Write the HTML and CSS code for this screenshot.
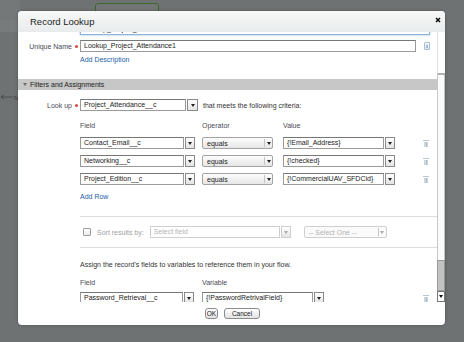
FILE: index.html
```html
<!DOCTYPE html>
<html lang="en">
<head>
    <meta charset="UTF-8">
    <meta name="viewport" content="width=device-width, initial-scale=1.0">
    <title>Record Lookup</title>
    <link rel="stylesheet" href="styles.css">
</head>
<body>

<!-- flow canvas behind the modal -->
<div class="bg-panel"></div>
<div class="bg-node"></div>
<svg class="bg-arrow" width="18" height="8" viewBox="0 0 18 8">
    <path d="M1 4H13M1 4L4 2M1 4L4 6" stroke="#444" stroke-width="0.8" fill="none"/>
    <text x="14" y="6.5" font-size="6" fill="#333" font-family="Liberation Sans, Arial, sans-serif">N</text>
</svg>

<div class="dialog">
    <div class="dialog-header">
        <span class="dialog-title">Record Lookup</span>
        <svg class="close-btn" width="6" height="6" viewBox="0 0 6 6">
            <path d="M1 1L5 5M5 1L1 5" stroke="#111" stroke-width="1.6"/>
        </svg>
    </div>

    <div class="dialog-body">
        <div class="scroll-content">
            <div class="form-row cut-row">
                <span class="row-label">Name</span>
                <span class="req"><i></i></span>
                <div class="text-input focused">Lookup_Project_Attendance</div>
            </div>

            <div class="form-row name-row">
                <span class="row-label">Unique Name</span>
                <span class="req"><i></i></span>
                <div class="text-input unique-input">Lookup_Project_Attendance1</div>
                <span class="info-icon">i</span>
            </div>
            <a class="link add-desc" href="#">Add Description</a>

            <div class="section-bar"><span class="tri"></span>Filters and Assignments</div>

            <div class="form-row lookup-row">
                <span class="row-label">Look up</span>
                <span class="req"><i></i></span>
                <div class="combo">
                    <span class="text-input lookup-input">Project_Attendance__c</span>
                    <span class="arrow-btn"></span>
                </div>
                <span class="hint">that meets the following criteria:</span>
            </div>

            <div class="criteria">
                <span class="col-head">Field</span>
                <span class="col-head">Operator</span>
                <span class="col-head">Value</span>
                <span></span>

                <div class="combo">
                    <span class="text-input field-input">Contact_Email__c</span>
                    <span class="arrow-btn"></span>
                </div>
                <div class="select op-select"><span>equals</span><span class="sel-arrow"></span></div>
                <div class="combo">
                    <span class="text-input value-input">{!Email_Address}</span>
                    <span class="arrow-btn"></span>
                </div>
                <span class="trash"></span>

                <div class="combo">
                    <span class="text-input field-input">Networking__c</span>
                    <span class="arrow-btn"></span>
                </div>
                <div class="select op-select"><span>equals</span><span class="sel-arrow"></span></div>
                <div class="combo">
                    <span class="text-input value-input">{!checked}</span>
                    <span class="arrow-btn"></span>
                </div>
                <span class="trash"></span>

                <div class="combo">
                    <span class="text-input field-input">Project_Edition__c</span>
                    <span class="arrow-btn"></span>
                </div>
                <div class="select op-select"><span>equals</span><span class="sel-arrow"></span></div>
                <div class="combo">
                    <span class="text-input value-input">{!CommercialUAV_SFDCid}</span>
                    <span class="arrow-btn"></span>
                </div>
                <span class="trash"></span>
            </div>
            <a class="link add-row" href="#">Add Row</a>

            <div class="divider first-divider"></div>

            <div class="sort-row">
                <span class="checkbox"></span>
                <span class="sort-label">Sort results by:</span>
                <div class="combo disabled">
                    <span class="text-input sort-input">Select field</span>
                    <span class="arrow-btn"></span>
                </div>
                <div class="select disabled order-select"><span>-- Select One --</span><span class="sel-arrow"></span></div>
            </div>

            <div class="divider second-divider"></div>

            <p class="assign-text">Assign the record's fields to variables to reference them in your flow.</p>

            <div class="assignments">
                <span class="col-head">Field</span>
                <span class="col-head">Variable</span>
                <span></span>

                <div class="combo">
                    <span class="text-input pw-input">Password_Retrieval__c</span>
                    <span class="arrow-btn"></span>
                </div>
                <div class="combo">
                    <span class="text-input var-input">{!PasswordRetrivalField}</span>
                    <span class="arrow-btn"></span>
                </div>
                <span class="trash"></span>
            </div>
        </div>

        <div class="scrollbar">
            <div class="scroll-top"></div>
            <div class="scroll-track"></div>
            <div class="scroll-thumb"></div>
            <div class="scroll-down"></div>
        </div>
    </div>

    <div class="dialog-footer">
        <button class="btn ok-btn">OK</button>
        <button class="btn cancel-btn">Cancel</button>
    </div>
</div>

</body>
</html>
```

FILE: styles.css
```css
/* page */
body {
    margin: 0;
    width: 464px;
    height: 342px;
    overflow: hidden;
    position: relative;
    background-color: #6e7272;
    font-family: "Liberation Sans", Arial, sans-serif;
    font-size: 7px;
    color: #333;
}

/* canvas bits behind the modal */
.bg-panel {
    position: absolute;
    left: 0;
    top: 0;
    width: 20px;
    height: 32px;
    background-color: #777b7b;
    border-bottom-right-radius: 3px;
    border-top: 20px solid #747878;
    box-sizing: border-box;
}

.bg-node {
    position: absolute;
    left: 95px;
    top: 3px;
    width: 62px;
    height: 14px;
    border: 1px solid #3d6a2c;
    border-radius: 3px;
    background-color: #717575;
}

.bg-arrow {
    position: absolute;
    left: 0;
    top: 93px;
}

/* dialog */
.dialog {
    position: absolute;
    left: 18px;
    top: 11px;
    width: 427px;
    height: 314px;
    display: flex;
    flex-direction: column;
    background-color: #fff;
    border-radius: 4px;
    overflow: hidden;
    box-shadow: 0 0 3px rgba(0, 0, 0, 0.3);
}

.dialog-header {
    height: 21px;
    flex: none;
    display: flex;
    align-items: center;
    justify-content: space-between;
    padding: 0 4px 0 12px;
    background: linear-gradient(#f7f8f8, #e9ecec);
}

.dialog-title {
    font-size: 9.5px;
    color: #222;
}

.close-btn {
    margin-top: -3px;
}

.dialog-body {
    height: 270px;
    flex: none;
    display: flex;
}

.scroll-content {
    flex: 1;
    overflow: hidden;
}

.dialog-footer {
    flex: 1;
    display: flex;
    justify-content: center;
    align-items: flex-start;
    gap: 6px;
    padding-top: 6px;
    padding-left: 2px;
}

/* form rows */
.form-row {
    display: flex;
    align-items: center;
    height: 12px;
}

.row-label {
    width: 54px;
    text-align: right;
    color: #4a4a56;
}

.req {
    width: 8px;
    display: flex;
    justify-content: center;
}

.req i {
    width: 3px;
    height: 3px;
    border-radius: 50%;
    background-color: #e2453f;
}

.text-input {
    display: block;
    height: 12px;
    box-sizing: border-box;
    border: 1px solid #9a9a9a;
    border-top-color: #777;
    padding: 0 3px;
    line-height: 10px;
    color: #222;
    background-color: #fff;
    white-space: nowrap;
    overflow: hidden;
}

.cut-row {
    margin-top: -9px;
}

.cut-row .row-label {
    visibility: hidden;
}

.focused {
    width: 350px;
    border-color: #8db4de;
    box-shadow: 0 0 2px #8db4de;
}

.name-row {
    margin-top: 5px;
}

.unique-input {
    width: 336px;
}

.info-icon {
    width: 6px;
    height: 8px;
    margin-left: 8px;
    box-sizing: border-box;
    border: 1px solid #a9bfd6;
    border-radius: 1px;
    background: linear-gradient(#fff, #dbe6f1);
    color: #2c64a9;
    font-size: 5px;
    font-weight: bold;
    line-height: 6px;
    text-align: center;
}

.link {
    display: block;
    color: #1b5eaa;
    text-decoration: none;
    line-height: 10px;
    margin-left: 62px;
    width: max-content;
}

.add-desc {
    margin-top: 3px;
}

.section-bar {
    margin-top: 14px;
    height: 11px;
    line-height: 11px;
    background-color: #c7c7c7;
    padding-left: 5px;
    color: #222;
    display: flex;
    align-items: center;
}

.tri {
    width: 0;
    height: 0;
    border-left: 2px solid transparent;
    border-right: 2px solid transparent;
    border-top: 3px solid #6a6a6a;
    margin-right: 3px;
}

.lookup-row {
    margin-top: 9px;
}

.hint {
    margin-left: 5px;
    color: #333;
}

/* combo = text box + arrow button */
.combo {
    display: flex;
    gap: 1px;
    height: 12px;
}

.arrow-btn {
    width: 10px;
    height: 12px;
    box-sizing: border-box;
    border: 1px solid #8a8a8a;
    background: linear-gradient(#fff, #e4e4e4);
    display: flex;
    align-items: center;
    justify-content: center;
}

.arrow-btn::before,
.sel-arrow::before {
    content: "";
    border-left: 2px solid transparent;
    border-right: 2px solid transparent;
    border-top: 3px solid #222;
}

.lookup-input {
    width: 106px;
}

.lookup-row .arrow-btn {
    width: 11px;
}

/* native looking select */
.select {
    display: flex;
    align-items: center;
    height: 12px;
    box-sizing: border-box;
    border: 1px solid #a3a3a3;
    border-radius: 2px;
    background: linear-gradient(#fdfdfd, #e6e6e6);
    color: #222;
    padding-left: 4px;
}

.select span:first-child {
    flex: 1;
}

.sel-arrow {
    width: 7px;
    height: 8px;
    border-left: 1px solid #c4c4c4;
    display: flex;
    align-items: center;
    justify-content: center;
}

.op-select {
    width: 71px;
}

/* criteria grid */
.criteria {
    margin-top: 10px;
    margin-left: 62px;
    display: grid;
    grid-template-columns: 122px 81px 140px 7px;
    grid-template-rows: 10px;
    grid-auto-rows: 12px;
    row-gap: 6px;
    align-items: center;
}

.criteria .col-head {
    margin-top: -1px;
}

.col-head {
    color: #4a4a56;
    line-height: 10px;
}

.field-input {
    width: 104px;
}

.value-input {
    width: 101px;
}

.trash {
    width: 6px;
    height: 7px;
    background:
        linear-gradient(#b9c7d2, #b9c7d2) 0 0 / 6px 1px no-repeat,
        linear-gradient(90deg, #cbd6df 0 2px, #aebdc9 2px 3px, #cbd6df 3px) 1px 2px / 4px 5px no-repeat;
}

.add-row {
    margin-top: 7px;
}

.divider {
    border-top: 1px solid #dedede;
    margin-left: 62px;
}

.first-divider {
    margin-top: 14px;
}

/* sort */
.sort-row {
    display: flex;
    align-items: center;
    height: 12px;
    margin-top: 9px;
    margin-left: 65px;
}

.checkbox {
    width: 8px;
    height: 8px;
    box-sizing: border-box;
    border: 1px solid #9d9d9d;
    border-radius: 1px;
    background: linear-gradient(#fff, #ececec);
}

.sort-label {
    margin-left: 6px;
    color: #a0a0a0;
}

.sort-row .combo {
    margin-left: 6px;
}

.disabled .text-input,
.disabled .arrow-btn,
.select.disabled {
    border-color: #cfcfcf;
    color: #b4b4b4;
}

.disabled .arrow-btn::before,
.select.disabled .sel-arrow::before {
    border-top-color: #aaa;
}

.sort-input {
    width: 130px;
}

.order-select {
    width: 83px;
    margin-left: 13px;
    background: #fafafa;
}

.second-divider {
    margin-top: 9px;
}

.assign-text {
    margin: 12px 0 0 62px;
    line-height: 10px;
    color: #333;
}

.assignments {
    margin-top: 8px;
    margin-left: 62px;
    display: grid;
    grid-template-columns: 122px 221px 7px;
    grid-template-rows: 10px;
    grid-auto-rows: 12px;
    row-gap: 4px;
    align-items: center;
}

.pw-input {
    width: 103px;
}

.var-input {
    width: 111px;
}

/* scrollbar */
.scrollbar {
    width: 8px;
    display: flex;
    flex-direction: column;
}

.scroll-top {
    height: 41px;
    background-color: #fff;
    border-left: 1px solid #e2e2e2;
    border-bottom: 2px solid #b0b0b0;
}

.scroll-track {
    flex: 1;
    border-left: 1px solid #c8c8c8;
    border-right: 1px solid #c8c8c8;
    background-color: #fbfbfb;
}

.scroll-thumb {
    height: 31px;
    box-sizing: border-box;
    border: 1px solid #9a9a9a;
    background-color: #c2c2c2;
}

.scroll-down {
    height: 11px;
    box-sizing: border-box;
    border: 1px solid #777;
    background-color: #fff;
    display: flex;
    align-items: center;
    justify-content: center;
}

.scroll-down::before {
    content: "";
    border-left: 2px solid transparent;
    border-right: 2px solid transparent;
    border-top: 3px solid #111;
}

/* buttons */
.btn {
    height: 11px;
    padding: 0;
    font-family: inherit;
    font-size: 6.5px;
    color: #222;
    border: 1px solid #8c8c8c;
    border-radius: 3px;
    background: linear-gradient(#fff, #e2e2e2);
    cursor: pointer;
}

.ok-btn {
    width: 13px;
}

.cancel-btn {
    width: 36px;
}
```
